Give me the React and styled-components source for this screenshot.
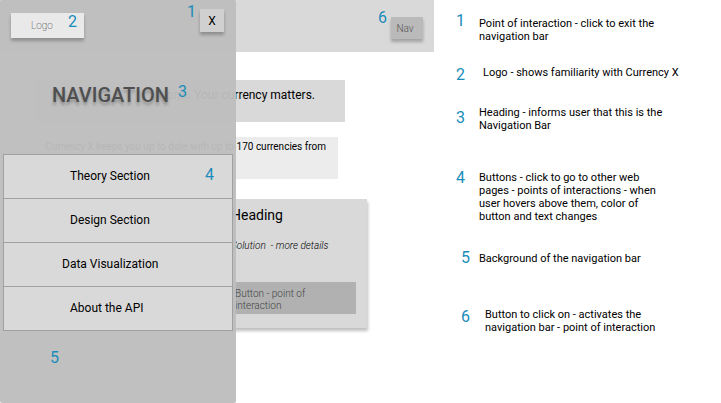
import React from "react";
import styled, { createGlobalStyle } from "styled-components";

const GlobalStyle = createGlobalStyle`
  *, *::before, *::after { box-sizing: border-box; }
  body { margin: 0; background: #fff; color: #000; font-family: Roboto, sans-serif; }
  h1, h2, p, ul, ol { margin: 0; padding: 0; list-style: none; }
  button { font: inherit; border: 0; padding: 0; cursor: pointer; }
  a { color: inherit; text-decoration: none; }
`;

const Page = styled.div`
  display: grid;
  grid-template-columns: minmax(0, 434fr) minmax(0, 287fr);
  min-height: 100vh;
`;

const Mockup = styled.section`
  position: relative;
`;

const Marker = styled.span`
  color: #1a8cba;
  font-size: 16px;
  font-weight: 400;
  line-height: 20px;
`;

const PinnedMarker = styled(Marker)`
  position: absolute;
  top: ${(p) => p.$top}px;
  left: ${(p) => p.$left}px;
  right: ${(p) => p.$right}px;
`;

const TopBar = styled.header`
  position: relative;
  display: flex;
  justify-content: flex-end;
  height: 52px;
  padding: 17px 11px 0 0;
  background: #d9d9d9;
`;

const NavButton = styled.button`
  width: 32px;
  height: 22px;
  padding-right: 4px;
  background: #bababa;
  color: #555;
  font-size: 10px;
  font-weight: 300;
  box-shadow: 0 3px 3px rgba(0, 0, 0, 0.25);
`;

const Content = styled.main`
  display: flex;
  flex-direction: column;
  padding: 28px 67px 0 35px;
`;

const Banner = styled.p`
  height: 42px;
  margin-right: 22px;
  padding: 8px 30px;
  background: #d9d9d9;
  font-size: 12px;
  font-weight: 400;
  line-height: 14px;
  text-align: right;
  white-space: nowrap;
`;

const Intro = styled.p`
  height: 42px;
  margin: 15px 29px 0 0;
  padding: 4px 12px 4px 10px;
  background: #ececec;
  font-size: 10px;
  font-weight: 400;
  line-height: 12px;
  text-align: right;
  white-space: nowrap;
`;

const Card = styled.article`
  display: flex;
  flex-direction: column;
  height: 129px;
  margin: 20px 0 0 180px;
  padding: 8px 11px 14px 16px;
  background: #d9d9d9;
  box-shadow: 1px 3px 3px rgba(0, 0, 0, 0.25);
`;

const CardTitle = styled.h2`
  font-size: 14px;
  font-weight: 400;
  line-height: 16px;
`;

const CardText = styled.p`
  margin-top: 17px;
  font-size: 10px;
  font-style: italic;
  font-weight: 300;
  line-height: 12px;
  white-space: pre;
`;

const CardButton = styled.button`
  height: 32px;
  margin-top: auto;
  padding: 4px 40px 0 4px;
  background: #b1b1b1;
  color: #444;
  font-size: 10px;
  font-weight: 300;
  line-height: 12px;
  text-align: left;
`;

const Drawer = styled.aside`
  position: absolute;
  inset: 0 auto 0 0;
  width: 236px;
  border-radius: 2px;
  background: rgba(189, 189, 189, 0.96);
`;

const DrawerTop = styled.div`
  display: flex;
  justify-content: space-between;
  padding: 9px 12px 0 11px;
`;

const Logo = styled.a`
  width: 73px;
  height: 25px;
  margin-top: 4px;
  padding-left: 20px;
  background: #e9e9e9;
  color: #000;
  font-size: 10px;
  font-weight: 100;
  line-height: 26px;
  box-shadow: 0 3px 3px rgba(0, 0, 0, 0.25);
`;

const CloseButton = styled.button`
  width: 24px;
  height: 23px;
  background: #d0d0d0;
  color: #000;
  font-size: 12px;
  font-weight: 400;
  box-shadow: 0 3px 3px rgba(0, 0, 0, 0.25);
`;

const DrawerTitle = styled.h1`
  margin-top: 45px;
  padding-left: 52px;
  color: #4f4f4f;
  font-size: 20px;
  font-weight: 500;
  line-height: 24px;
  text-shadow: 0 3px 3px rgba(0, 0, 0, 0.25);
`;

const Menu = styled.ul`
  margin: 47px 3px 0;
  border: 1px solid #a0a0a0;
`;

const MenuItem = styled.li`
  background: #d9d9d9;
  & + & { border-top: 1px solid #a0a0a0; }
`;

const MenuLink = styled.a`
  display: block;
  padding-left: ${(p) => (p.$wide ? 58 : 66)}px;
  font-size: 12px;
  line-height: 43px;
  &:hover { background: #bdbdbd; color: #fff; }
`;

const Legend = styled.ol`
  padding: 11px 20px 20px 22px;
`;

const LegendRow = styled.li`
  display: flex;
  align-items: flex-start;
  gap: ${(p) => p.$gap}px;
  margin-bottom: ${(p) => p.$after}px;
  padding-left: ${(p) => p.$indent}px;
`;

const LegendMarker = styled(Marker)`
  padding-top: ${(p) => p.$drop}px;
`;

const LegendText = styled.p`
  max-width: ${(p) => (p.$wide ? 220 : 187)}px;
  padding-top: ${(p) => p.$drop}px;
  font-size: 11px;
  line-height: 13px;
`;

const menu = [
  { label: "Theory Section" },
  { label: "Design Section" },
  { label: "Data Visualization", wide: true },
  { label: "About the API" },
];

const notes = [
  { gap: 14, indent: 0, drop: 6, after: 22, text: "Point of interaction - click to exit the navigation bar" },
  { gap: 18, indent: 0, drop: 1, after: 21, wide: true, text: "Logo - shows familiarity with Currency X" },
  { gap: 14, indent: 0, drop: 0, markerDrop: 2, after: 36, text: "Heading - informs user that this is the Navigation Bar" },
  { gap: 14, indent: 0, drop: 3, after: 25, text: "Buttons - click to go to other web pages - points of interactions - when user hovers above them, color of button and text changes" },
  { gap: 9, indent: 5, drop: 4, after: 39, text: "Background of the navigation bar" },
  { gap: 15, indent: 5, drop: 1, after: 0, text: "Button to click on - activates the navigation bar - point of interaction" },
];

export default function App() {
  return (
    <>
      <GlobalStyle />
      <Page>
        <Mockup>
          <TopBar>
            <PinnedMarker $top={8} $right={47}>6</PinnedMarker>
            <NavButton>Nav</NavButton>
          </TopBar>
          <Content>
            <Banner>orm. Your currency matters.</Banner>
            <Intro>Currency X keeps you up to date with up to 170 currencies from</Intro>
            <Card>
              <CardTitle>Heading</CardTitle>
              <CardText>{"Solution  - more details"}</CardText>
              <CardButton>Button - point of interaction</CardButton>
            </Card>
          </Content>
          <Drawer>
            <DrawerTop>
              <Logo href="#home">Logo</Logo>
              <CloseButton>X</CloseButton>
            </DrawerTop>
            <DrawerTitle>NAVIGATION</DrawerTitle>
            <nav>
              <Menu>
                {menu.map(({ label, wide }) => (
                  <MenuItem key={label}>
                    <MenuLink href="#section" $wide={wide}>{label}</MenuLink>
                  </MenuItem>
                ))}
              </Menu>
            </nav>
            <PinnedMarker $top={2} $left={187}>1</PinnedMarker>
            <PinnedMarker $top={12} $left={68}>2</PinnedMarker>
            <PinnedMarker $top={82} $left={178}>3</PinnedMarker>
            <PinnedMarker $top={165} $left={205}>4</PinnedMarker>
            <PinnedMarker $top={348} $left={50}>5</PinnedMarker>
          </Drawer>
        </Mockup>
        <Legend>
          {notes.map((note, i) => (
            <LegendRow key={note.text} $gap={note.gap} $indent={note.indent} $after={note.after}>
              <LegendMarker $drop={note.markerDrop ?? 0}>{i + 1}</LegendMarker>
              <LegendText $drop={note.drop} $wide={note.wide}>{note.text}</LegendText>
            </LegendRow>
          ))}
        </Legend>
      </Page>
    </>
  );
}
